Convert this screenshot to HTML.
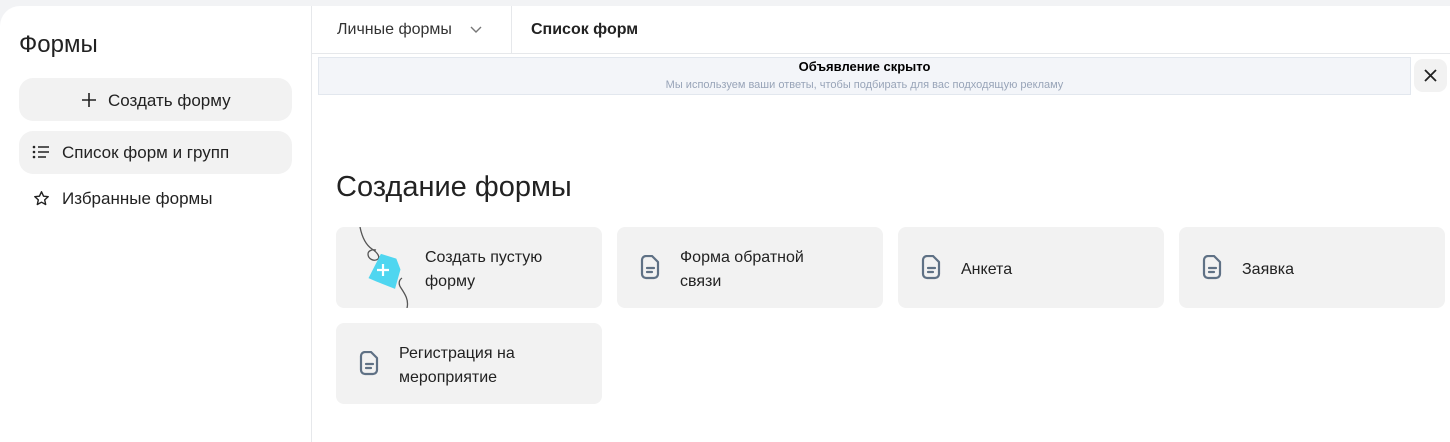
<!DOCTYPE html>
<html><head><meta charset="utf-8"><style>
*{box-sizing:border-box;margin:0;padding:0}
body{width:1450px;height:442px;background:#f2f3f5;font-family:"Liberation Sans",sans-serif;color:#222;position:relative;overflow:hidden}
.abs{position:absolute}
.left{left:0;top:6px;width:311px;height:436px;background:#fff;border-top-left-radius:20px}
.main{left:311px;top:6px;width:1139px;height:436px;background:#fff;border-left:1px solid #e6e8eb}
.btn{background:#f2f2f2;border-radius:14px}
.card{background:#f2f2f2;border-radius:8px;height:81px;width:266px;font-size:16px;line-height:24px;color:#222}
.doc{position:absolute;left:22px;top:28px}
.ct{position:absolute;top:50%;transform:translateY(-50%);margin-top:2px}
</style></head><body>
<div class="abs left">
  <div class="abs" style="left:19px;top:25px;font-size:24px;color:#222">Формы</div>
  <div class="abs btn" style="left:19px;top:72px;width:273px;height:43px"></div>
  <svg class="abs" style="left:81px;top:86px" width="16" height="16" viewBox="0 0 16 16"><path d="M8 1v14M1 8h14" stroke="#222" stroke-width="1.6"/></svg>
  <div class="abs" style="left:108px;top:85px;font-size:17px">Создать форму</div>
  <div class="abs btn" style="left:19px;top:125px;width:273px;height:43px"></div>
  <svg class="abs" style="left:32px;top:138px" width="18" height="16" viewBox="0 0 18 16"><g fill="#222"><circle cx="2" cy="3" r="1.3"/><circle cx="2" cy="8" r="1.3"/><circle cx="2" cy="13" r="1.3"/></g><path d="M6 3h11M6 8h11M6 13h8" stroke="#222" stroke-width="1.5"/></svg>
  <div class="abs" style="left:62px;top:137px;font-size:17px">Список форм и групп</div>
  <svg class="abs" style="left:33px;top:184px" width="17" height="17" viewBox="0 0 24 24"><path d="M12 2.5l2.9 6.2 6.6.7-5 4.5 1.4 6.6L12 17.2l-5.9 3.3 1.4-6.6-5-4.5 6.6-.7z" fill="none" stroke="#222" stroke-width="2" stroke-linejoin="round"/></svg>
  <div class="abs" style="left:62px;top:183px;font-size:17px">Избранные формы</div>
</div>
<div class="abs main">
  <div class="abs" style="left:0;top:47px;width:1139px;height:1px;background:#e6e8eb"></div>
  <div class="abs" style="left:199px;top:0;width:1px;height:47px;background:#e6e8eb"></div>
  <div class="abs" style="left:25px;top:15px;font-size:16px;color:#333">Личные формы</div>
  <svg class="abs" style="left:158px;top:20px" width="12" height="8" viewBox="0 0 12 8"><path d="M1 1l5 5 5-5" fill="none" stroke="#777" stroke-width="1.4"/></svg>
  <div class="abs" style="left:219px;top:15px;font-size:16px;font-weight:bold;color:#222">Список форм</div>
  <div class="abs" style="left:6px;top:51px;width:1093px;height:38px;background:#f3f5f9;border:1px solid #e2e7ee;text-align:center">
    <div style="font-size:13px;font-weight:bold;color:#000;margin-top:1px;line-height:16px">Объявление скрыто</div>
    <div style="font-size:11px;color:#98a4b8;margin-top:4px;line-height:13px">Мы используем ваши ответы, чтобы подбирать для вас подходящую рекламу</div>
  </div>
  <div class="abs" style="left:1102px;top:53px;width:33px;height:33px;border-radius:9px;background:#f2f2f2"></div>
  <svg class="abs" style="left:1112px;top:63px" width="13" height="13" viewBox="0 0 13 13"><path d="M1 1l11 11M12 1L1 12" stroke="#222" stroke-width="1.8"/></svg>
  <div class="abs" style="left:24px;top:165px;font-size:29px;color:#222">Создание формы</div>
</div>
<div class="abs card" style="left:336px;top:227px;overflow:hidden">
  <svg class="abs" style="left:0;top:0" width="80" height="81" viewBox="0 0 80 81"><path d="M24 0c2 10 6 18 12 22c6 4 8 8 6 10c-4 3-10 0-10-5c0-3 4-5 8-4" fill="none" stroke="#555" stroke-width="1.3"/><path d="M66 51c-3 2-4 6-1 10c4 6 8 12 6 20" fill="none" stroke="#555" stroke-width="1.3"/><path d="M42 28l16 2 6 10-2 20-20-4-8-2z" fill="#4fd6f0" transform="rotate(10 50 44)"/><path d="M47 37v12M41 43h12" stroke="#fff" stroke-width="2.2"/></svg>
  <div class="ct" style="left:89px">Создать пустую<br>форму</div>
</div>
<svg width="0" height="0" style="position:absolute"><defs><g id="d"><path d="M3 5a4 4 0 0 1 4-4h6l6 6v12a4 4 0 0 1-4 4H7a4 4 0 0 1-4-4z" fill="none" stroke="#5f7185" stroke-width="2.2" stroke-linejoin="round"/><path d="M8 13h7M8 17h5" stroke="#5f7185" stroke-width="2.2" stroke-linecap="round"/></g></defs></svg>
<div class="abs card" style="left:617px;top:227px"><svg class="doc" width="22" height="25" viewBox="0 0 22 25"><use href="#d"/></svg><div class="ct" style="left:63px">Форма обратной<br>связи</div></div>
<div class="abs card" style="left:898px;top:227px"><svg class="doc" width="22" height="25" viewBox="0 0 22 25"><use href="#d"/></svg><div class="ct" style="left:63px">Анкета</div></div>
<div class="abs card" style="left:1179px;top:227px"><svg class="doc" width="22" height="25" viewBox="0 0 22 25"><use href="#d"/></svg><div class="ct" style="left:63px">Заявка</div></div>
<div class="abs card" style="left:336px;top:323px"><svg class="doc" width="22" height="25" viewBox="0 0 22 25"><use href="#d"/></svg><div class="ct" style="left:63px">Регистрация на<br>мероприятие</div></div>
</body></html>
